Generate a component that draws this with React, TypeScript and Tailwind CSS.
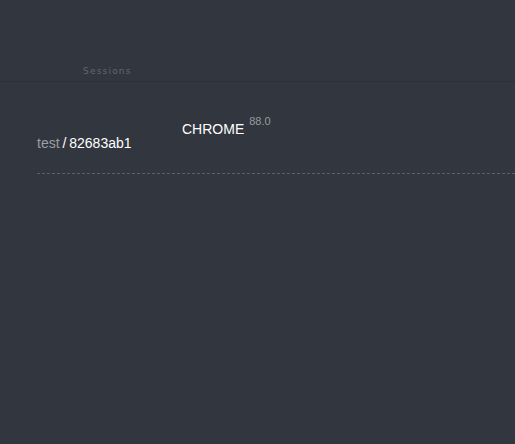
const sessions = [{ user: 'test', id: '82683ab1', browser: 'CHROME', version: '88.0' }]

const App = () => {
  return (
    <div className="min-h-[444px] w-full bg-[#32363e] font-['Liberation_Sans',Arial,sans-serif]">
      <div className="h-[82px] border-b border-[#2c3037] flex items-end pb-[3px] pl-[83px]">
        <span className="font-['DejaVu_Sans',sans-serif] text-[9px] tracking-[1.2px] text-[#62666d]">
          Sessions
        </span>
      </div>
      <div className="pl-[37px] pt-[34px]">
        {sessions.map((s) => (
          <div key={s.id} className="flex border-b border-dashed border-[#5c6068] pb-[22px]">
            <div className="w-[145px] pt-[19px] text-[14px] leading-[16px] [word-spacing:-1px]">
              <span className="text-[#9b9fa5]">{s.user}</span>
              <span className="text-white"> / {s.id}</span>
            </div>
            <div className="flex items-start text-[14px] leading-[16px] text-white">
              <span className="pt-[5px]">{s.browser}</span>
              <span className="ml-[5px] -mt-[3px] text-[11px] text-[#969a9f]">{s.version}</span>
            </div>
          </div>
        ))}
      </div>
    </div>
  )
}

export default App
